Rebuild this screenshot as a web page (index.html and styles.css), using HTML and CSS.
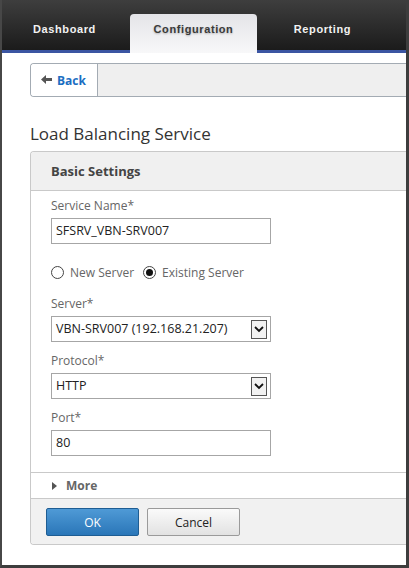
FILE: index.html
```html
<!DOCTYPE html>
<html lang="en">
<head>
    <meta charset="UTF-8">
    <meta name="viewport" content="width=device-width, initial-scale=1.0">
    <title>Load Balancing Service</title>
    <link rel="stylesheet" href="styles.css">
</head>
<body>
    <div class="frame">
        <!-- Top navigation -->
        <div class="top-nav">
            <div class="nav-tab">Dashboard</div>
            <div class="nav-tab active">Configuration</div>
            <div class="nav-tab">Reporting</div>
        </div>

        <div class="content">
            <!-- Breadcrumb bar -->
            <div class="back-bar">
                <button class="back-btn">
                    <svg class="back-arrow" width="11" height="9" viewBox="0 0 11 9">
                        <path d="M0 4.5 L5 0 L5 3 L11 3 L11 6 L5 6 L5 9 Z" fill="#555"/>
                    </svg>
                    Back
                </button>
                <div class="back-fill"></div>
            </div>

            <h1 class="page-title">Load Balancing Service</h1>

            <div class="panel">
                <div class="panel-header">Basic Settings</div>

                <div class="panel-body">
                    <label class="field-label">Service Name*</label>
                    <div class="text-box">SFSRV_VBN-SRV007</div>

                    <div class="radio-row">
                        <span class="radio"></span>
                        <span class="radio-text">New Server</span>
                        <span class="radio checked"></span>
                        <span class="radio-text">Existing Server</span>
                    </div>

                    <label class="field-label">Server*</label>
                    <div class="text-box select-box">
                        <span>VBN-SRV007 (192.168.21.207)</span>
                        <span class="drop-btn">
                            <svg width="10" height="7" viewBox="0 0 10 7">
                                <path d="M1 1 L5 5 L9 1" fill="none" stroke="#111" stroke-width="1.8"/>
                            </svg>
                        </span>
                    </div>

                    <label class="field-label">Protocol*</label>
                    <div class="text-box select-box">
                        <span>HTTP</span>
                        <span class="drop-btn">
                            <svg width="10" height="7" viewBox="0 0 10 7">
                                <path d="M1 1 L5 5 L9 1" fill="none" stroke="#111" stroke-width="1.8"/>
                            </svg>
                        </span>
                    </div>

                    <label class="field-label">Port*</label>
                    <div class="text-box last">80</div>
                </div>

                <div class="more-row">
                    <span class="more-arrow"></span>
                    <span>More</span>
                </div>

                <div class="panel-footer">
                    <button class="btn btn-primary">OK</button>
                    <button class="btn">Cancel</button>
                </div>
            </div>
        </div>
    </div>
</body>
</html>
```

FILE: styles.css
```css
html, body {
    margin: 0;
    padding: 0;
}

body {
    font-family: "Open Sans", "Noto Sans", sans-serif;
    background: #fff;
}

.frame {
    width: 409px;
    height: 568px;
    box-sizing: border-box;
    border-left: 2px solid #474747;
    border-right: 3px solid #3d3d3d;
    border-bottom: 3px solid #3d3d3d;
    overflow: hidden;
    background: white;
}

/* Header */
.top-nav {
    height: 53px;
    box-sizing: border-box;
    padding-top: 14px;
    display: flex;
    gap: 2px;
    align-items: flex-end;
    margin-left: -1px;
    background:
        linear-gradient(to bottom, transparent 50px, #3b55a2 50px),
        linear-gradient(to bottom, #3e3e3e, #1b1b1b 50px);
}

.nav-tab {
    width: 127px;
    height: 39px;
    box-sizing: border-box;
    padding-top: 8px;
    text-align: center;
    font-family: "Liberation Sans", Arial, sans-serif;
    font-weight: bold;
    font-size: 11px;
    letter-spacing: 0.6px;
    line-height: 14px;
    color: #f2f2f2;
}

.nav-tab.active {
    background: linear-gradient(to bottom, #e4e4e8, #f8f8f9);
    border-radius: 4px 4px 0 0;
    color: #3a3a3a;
    text-shadow: 0 1px 2px rgba(0, 0, 0, 0.25);
}

/* Content */
.content {
    padding: 10px 0 0 28px;
}

.back-bar {
    display: flex;
    height: 34px;
    box-sizing: border-box;
    border: 1px solid #a3abb3;
    border-right: none;
    border-radius: 4px 0 0 4px;
    overflow: hidden;
}

.back-btn {
    width: 67px;
    border: none;
    border-right: 1px solid #a3abb3;
    background: white;
    display: flex;
    align-items: center;
    gap: 5px;
    padding: 0 0 0 10px;
    font-family: inherit;
    font-weight: bold;
    font-size: 12px;
    color: #1b6ec2;
    cursor: pointer;
}

.back-arrow {
    margin-top: -1px;
}

.back-fill {
    flex: 1;
    background: #efefef;
}

.page-title {
    margin: 25px 0 0;
    font-weight: normal;
    font-size: 17px;
    line-height: 24px;
    color: #333;
}

/* Panel */
.panel {
    margin-top: 5px;
    border: 1px solid #c9c9c9;
    border-right: none;
    border-radius: 4px 0 0 4px;
    overflow: hidden;
}

.panel-header {
    height: 38px;
    line-height: 38px;
    padding-left: 20px;
    background: #f0f0f0;
    border-bottom: 1px solid #c9c9c9;
    font-weight: bold;
    font-size: 13px;
    color: #444;
}

.panel-body {
    padding: 5px 0 16px 20px;
    display: flex;
    flex-direction: column;
    align-items: flex-start;
}

.field-label {
    font-size: 12px;
    line-height: 20px;
    margin-bottom: 2px;
    color: #666;
}

.text-box {
    width: 220px;
    height: 26px;
    box-sizing: border-box;
    border: 1px solid #a6a6a6;
    padding: 0 4px;
    font-size: 12.5px;
    line-height: 24px;
    color: #222;
    margin-bottom: 9px;
}

.text-box.last {
    margin-bottom: 0;
}

.select-box {
    display: flex;
    justify-content: space-between;
    align-items: center;
    padding-right: 3px;
}

.drop-btn {
    width: 16px;
    height: 19px;
    box-sizing: border-box;
    border: 1px solid #555;
    background: #f2f2f2;
    display: flex;
    align-items: center;
    justify-content: center;
}

.radio-row {
    display: flex;
    align-items: center;
    height: 22px;
    margin: 8px 0 11px;
    font-size: 12px;
    color: #666;
}

.radio {
    width: 13px;
    height: 13px;
    box-sizing: border-box;
    border: 1px solid #444;
    border-radius: 50%;
    position: relative;
}

.radio.checked::after {
    content: "";
    position: absolute;
    left: 2px;
    top: 2px;
    width: 7px;
    height: 7px;
    border-radius: 50%;
    background: #111;
}

.radio-text {
    margin: 0 9px 0 6px;
}

.more-row {
    height: 25px;
    border-top: 1px solid #c9c9c9;
    border-bottom: 1px solid #c9c9c9;
    display: flex;
    align-items: center;
    gap: 9px;
    padding-left: 21px;
    font-weight: bold;
    font-size: 12px;
    color: #666;
}

.more-arrow {
    width: 0;
    height: 0;
    border-top: 4px solid transparent;
    border-bottom: 4px solid transparent;
    border-left: 5px solid #555;
}

.panel-footer {
    background: #f1f1f1;
    padding: 9px 0 8px 15px;
    display: flex;
    gap: 8px;
}

.btn {
    width: 93px;
    height: 28px;
    border: 1px solid #9a9a9a;
    border-radius: 2px;
    background: linear-gradient(to bottom, #fafafa, #e2e2e2);
    font-family: inherit;
    font-size: 12px;
    color: #222;
    cursor: pointer;
}

.btn-primary {
    border-color: #1e5d93;
    background: linear-gradient(to bottom, #4f9ad6, #2a76b8);
    color: white;
}
```
